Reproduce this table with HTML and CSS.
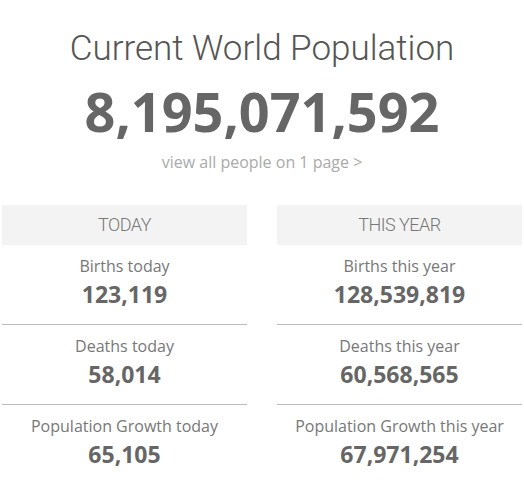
FILE: index.html
```html
<!DOCTYPE html>
<html>
<head lang="en">
<meta charset="UTF-8">
<title>Current World Population</title>
<link rel="stylesheet" href="styles.css">
</head>
<body>
<div class="top">
    <h1 class="title">Current World Population</h1>
    <div class="total">8,195,071,592</div>
    <p class="more"><a href="#">view all people on 1 page &gt;</a></p>
</div>
<div class="panels">
    <div class="panel">
        <div class="head">TODAY</div>
        <div class="row">
            <div class="label">Births today</div>
            <div class="num">123,119</div>
        </div>
        <div class="row">
            <div class="label">Deaths today</div>
            <div class="num">58,014</div>
        </div>
        <div class="row">
            <div class="label">Population Growth today</div>
            <div class="num">65,105</div>
        </div>
    </div>
    <div class="panel">
        <div class="head">THIS YEAR</div>
        <div class="row">
            <div class="label">Births this year</div>
            <div class="num">128,539,819</div>
        </div>
        <div class="row">
            <div class="label">Deaths this year</div>
            <div class="num">60,568,565</div>
        </div>
        <div class="row">
            <div class="label">Population Growth this year</div>
            <div class="num">67,971,254</div>
        </div>
    </div>
</div>
</body>
</html>
```

FILE: styles.css
```css
*{
    margin:0;
    padding:0;
    box-sizing:border-box;
}
body{
    background:#fff;
    font-family:"Open Sans",sans-serif;
    color:#666;
}
.top{
    text-align:center;
    padding-top:27px;
}
.title{
    font-family:Roboto,sans-serif;
    font-weight:300;
    font-size:35px;
    line-height:44px;
    color:#555;
}
.total{
    margin-top:8px;
    font-weight:700;
    font-size:54px;
    line-height:64px;
    color:#666;
}
.more{
    margin-top:7px;
    font-size:16px;
    line-height:24px;
}
.more a{
    color:#aaa;
    text-decoration:none;
}
.panels{
    display:flex;
    gap:30px;
    padding:0 2px;
    margin-top:31px;
}
.panel{
    flex:1;
    text-align:center;
}
.head{
    background:#f3f3f3;
    font-family:Roboto,sans-serif;
    font-weight:300;
    font-size:18px;
    letter-spacing:-0.5px;
    line-height:40px;
    color:#777;
}
.row{
    height:80px;
    padding-top:10px;
    border-bottom:1px solid #bbb;
}
.row:last-child{
    border-bottom:0;
}
.label{
    font-size:16px;
    line-height:22px;
    color:#777;
}
.num{
    margin-top:2px;
    font-weight:700;
    font-size:23px;
    line-height:30px;
    color:#666;
}
```
